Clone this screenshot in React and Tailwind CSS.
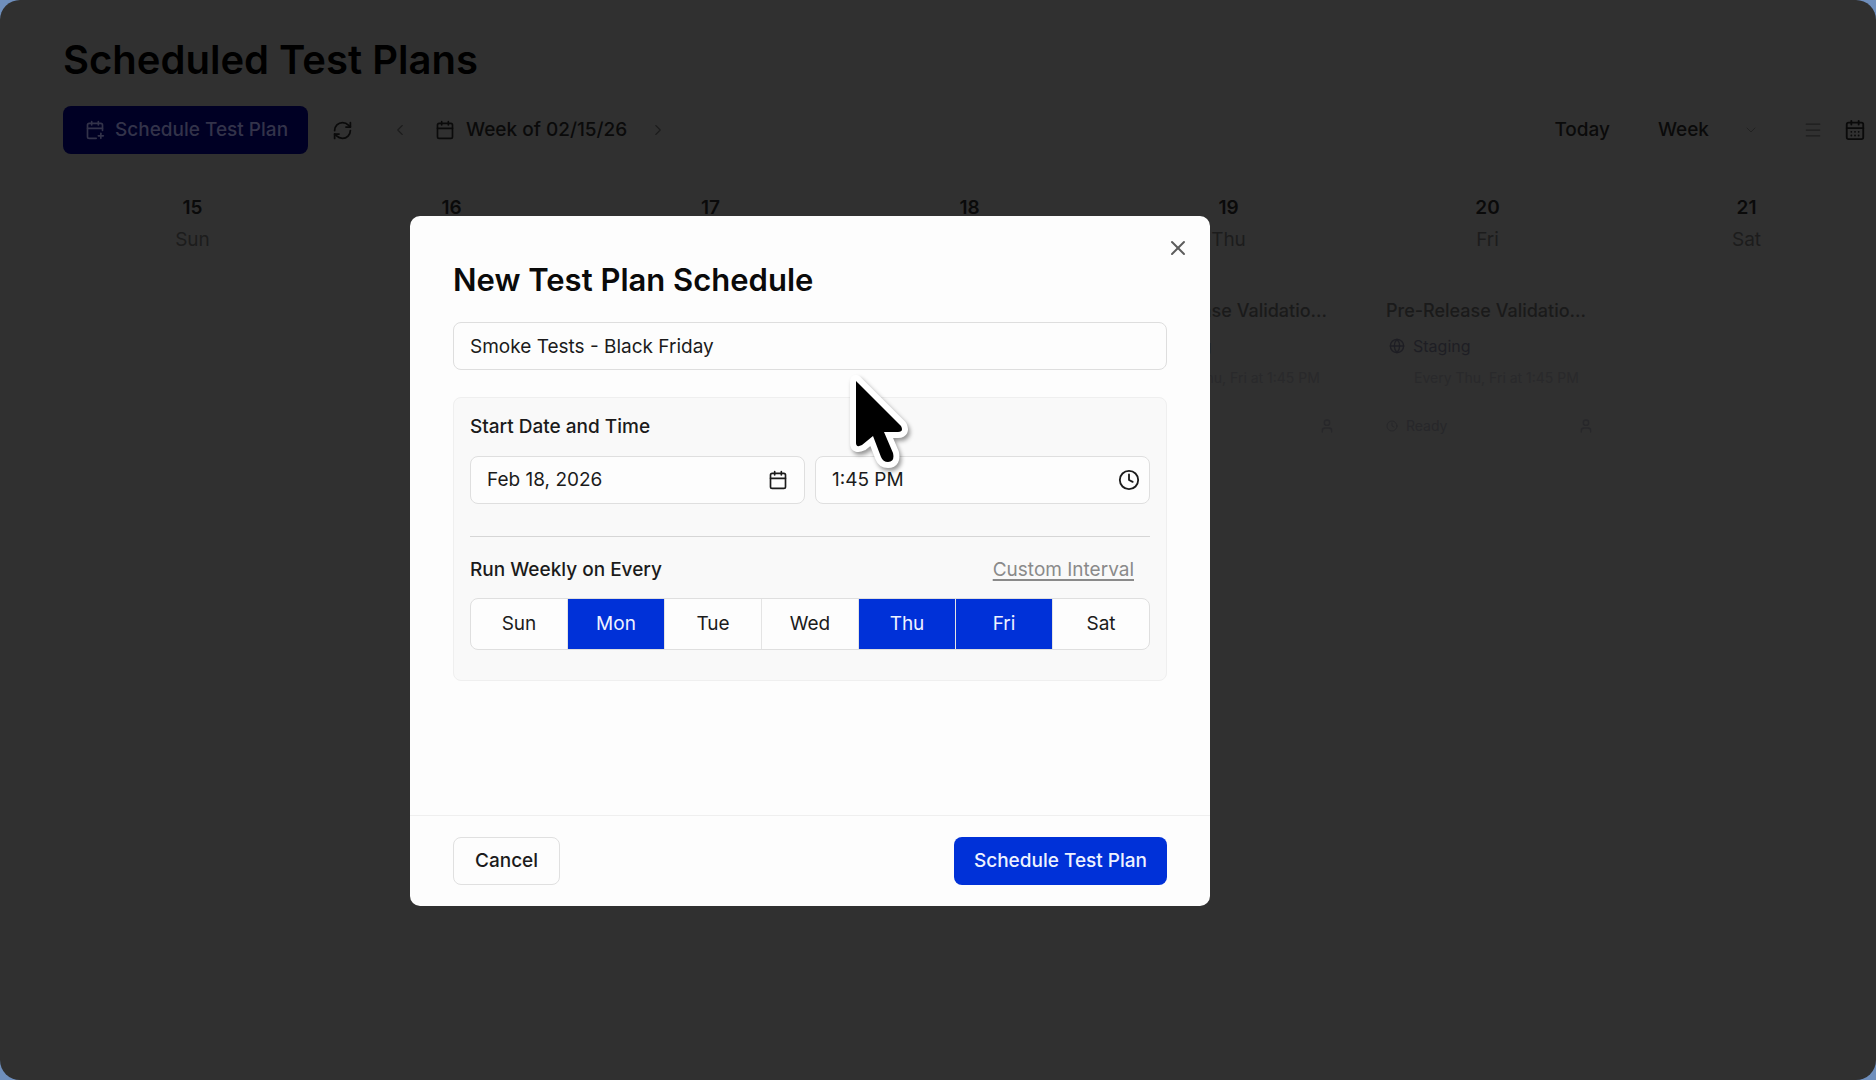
import React, { useState } from 'react';
import { Calendar, CalendarDays, CalendarPlus, ChevronDown, ChevronLeft, ChevronRight, Clock, Globe, Menu, RefreshCw, User, X } from 'lucide-react';

const week = [
  { date: 15, name: 'Sun' },
  { date: 16, name: 'Mon' },
  { date: 17, name: 'Tue' },
  { date: 18, name: 'Wed' },
  { date: 19, name: 'Thu', event: true },
  { date: 20, name: 'Fri', event: true },
  { date: 21, name: 'Sat' },
];

const EventCard = () => (
  <article className="mt-[43px] ml-7 w-[208px] text-[#1a1a1a]">
    <h3 className="text-lg leading-8 font-medium whitespace-nowrap">Pre-Release Validatio...</h3>
    <p className="mt-[7px] flex items-center gap-2 pl-[3px] text-base leading-6 text-[#1e1e24]">
      <Globe size={16} />
      Staging
    </p>
    <p className="mt-2 pl-7 text-sm leading-6 text-[#29292b]">Every Thu, Fri at 1:45 PM</p>
    <p className="mt-6 flex items-center justify-between text-sm leading-6 text-[#27272a]">
      <span className="flex items-center gap-2">
        <Clock size={12} />
        Ready
      </span>
      <User size={16} />
    </p>
  </article>
);

const Cursor = () => (
  <svg className="pointer-events-none absolute top-[156px] left-[437px] drop-shadow-[2px_3px_2px_rgba(0,0,0,0.4)]" width="64" height="100" viewBox="0 0 64 100" aria-hidden="true">
    <path
      d="M9 9 L54 54 Q57 60 51 60 L37 60 L46 81 Q48 90 41 90 Q36 90 34 85 L26 64 L15 73 Q9 76 9 71 Z"
      fill="#000"
      stroke="#fff"
      strokeWidth="12"
      strokeLinejoin="round"
      paintOrder="stroke"
    />
  </svg>
);

const ScheduleDialog = () => {
  const [name, setName] = useState('Smoke Tests - Black Friday');
  const [date, setDate] = useState('Feb 18, 2026');
  const [time, setTime] = useState('1:45 PM');
  const [days, setDays] = useState(['Mon', 'Thu', 'Fri']);

  const toggleDay = (day) => {
    setDays(days.includes(day) ? days.filter((d) => d !== day) : [...days, day]);
  };

  return (
    <div className="fixed inset-0 flex items-center justify-center pt-[42px] pr-64">
      <div role="dialog" aria-labelledby="dialog-title" className="relative w-full max-w-[800px] rounded-[10px] bg-[#fdfdfd] text-[#1b1b1b]">
        <button type="button" aria-label="Close" className="absolute top-5 right-5 text-[#5c5c5c]">
          <X size={24} strokeWidth={2} />
        </button>

        <div className="px-[43px] pt-11 pb-[134px]">
          <h2 id="dialog-title" className="text-[31px] leading-10 font-semibold text-[#0a0a0a]">New Test Plan Schedule</h2>
          <input
            type="text"
            aria-label="Schedule name"
            value={name}
            onChange={(e) => setName(e.target.value)}
            className="mt-[22px] h-12 w-full rounded-lg border border-[#dedede] px-4 text-[19px]"
          />

          <div className="mt-[27px] rounded-lg border border-[#efefef] bg-[#f9f9f9] px-4 pt-[17px] pb-[30px]">
            <h3 className="text-[19px] leading-6 font-medium">Start Date and Time</h3>
            <div className="mt-[17px] grid grid-cols-2 gap-[10px]">
              <label className="flex h-12 items-center rounded-lg border border-[#dfdfdf] bg-[#fdfdfd] px-4">
                <input aria-label="Start date" value={date} onChange={(e) => setDate(e.target.value)} className="min-w-0 flex-1 text-[19px] outline-none" />
                <Calendar size={20} />
              </label>
              <label className="flex h-12 items-center rounded-lg border border-[#dfdfdf] bg-[#fdfdfd] pr-[9px] pl-4">
                <input aria-label="Start time" value={time} onChange={(e) => setTime(e.target.value)} className="min-w-0 flex-1 text-[19px] outline-none" />
                <Clock size={22} />
              </label>
            </div>

            <hr className="mt-8 border-[#d6d6d6]" />

            <div className="mt-[21px] flex items-center justify-between pr-4">
              <h3 className="text-[19px] leading-6 font-medium">Run Weekly on Every</h3>
              <a href="#interval" className="text-[19px] leading-6 text-[#8a8a8a] underline decoration-2 underline-offset-3">Custom Interval</a>
            </div>
            <div className="mt-4 flex h-[52px] divide-x divide-[#e4e4e4] overflow-hidden rounded-lg border border-[#dfdfdf] bg-[#fdfdfd]">
              {week.map((day) => (
                <button
                  key={day.name}
                  type="button"
                  aria-pressed={days.includes(day.name)}
                  onClick={() => toggleDay(day.name)}
                  className={days.includes(day.name) ? 'flex-1 bg-[#0031d8] text-[19px] text-[#eef2ff]' : 'flex-1 text-[19px]'}
                >
                  {day.name}
                </button>
              ))}
            </div>
          </div>
        </div>

        <div className="flex items-center justify-between border-t border-[#efefef] px-[43px] py-[21px]">
          <button type="button" className="h-12 rounded-lg border border-[#e0e0e0] px-[21px] text-[19px] font-medium">Cancel</button>
          <button type="button" className="h-12 rounded-lg bg-[#0031d8] px-5 text-[19px] font-medium text-[#eef2ff]">Schedule Test Plan</button>
        </div>

        <Cursor />
      </div>
    </div>
  );
};

const App = () => {
  return (
    <div className="min-h-screen bg-[#6f8fbd] font-[Inter,sans-serif]">
      <main className="min-h-screen rounded-[20px] bg-[#303030] pl-[63px] text-[#0a0a0a]">
        <h1 className="pt-9 text-[40px] leading-12 font-semibold text-black">Scheduled Test Plans</h1>

        <div className="mt-[22px] flex h-12 items-center text-[19px] font-medium">
          <button type="button" className="flex h-12 items-center gap-[10px] rounded-lg bg-[#000024] pr-5 pl-[22px] text-[#33334a]">
            <CalendarPlus size={20} />
            Schedule Test Plan
          </button>
          <button type="button" aria-label="Refresh" className="ml-6">
            <RefreshCw size={21} />
          </button>
          <button type="button" aria-label="Previous week" className="ml-[38px] text-[#1c1c1c]">
            <ChevronLeft size={18} strokeWidth={1.5} />
          </button>
          <button type="button" className="ml-[26px] flex items-center gap-[11px]">
            <Calendar size={20} />
            Week of 02/15/26
          </button>
          <button type="button" aria-label="Next week" className="ml-[22px] text-[#1c1c1c]">
            <ChevronRight size={18} strokeWidth={1.5} />
          </button>

          <div className="ml-auto flex items-center pr-[10px]">
            <button type="button">Today</button>
            <button type="button" className="ml-12 flex items-center gap-[34px]">
              Week
              <ChevronDown size={16} strokeWidth={1.5} className="text-[#222222]" />
            </button>
            <button type="button" aria-label="List view" className="ml-11 text-[#1c1c1c]">
              <Menu size={20} strokeWidth={1.5} />
            </button>
            <button type="button" aria-label="Calendar view" className="ml-[21px]">
              <CalendarDays size={22} />
            </button>
          </div>
        </div>

        <div className="mt-[42px] grid grid-cols-7">
          {week.map((day) => (
            <section key={day.date}>
              <div className="text-center text-[19px]">
                <p className="leading-6 font-semibold">{day.date}</p>
                <p className="mt-2 leading-6 text-[#1c1c1c]">{day.name}</p>
              </div>
              {day.event && <EventCard />}
            </section>
          ))}
        </div>
      </main>
      <ScheduleDialog />
    </div>
  );
};

export default App;
